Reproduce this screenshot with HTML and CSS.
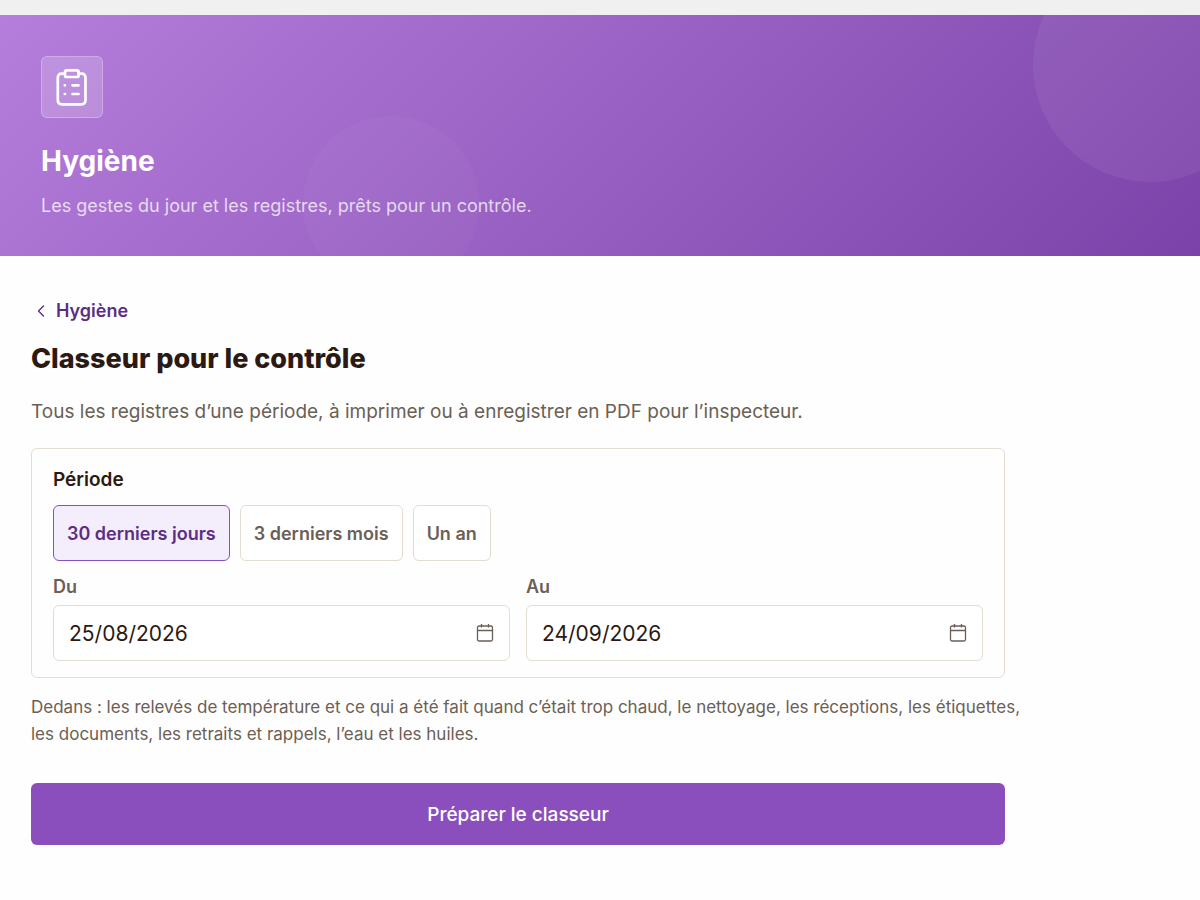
FILE: index.html
```
<!DOCTYPE html>
<html lang="fr">
<head>
    <meta charset="UTF-8">
    <meta name="viewport" content="width=device-width, initial-scale=1.0">
    <title>Classeur pour le contrôle</title>
    <link rel="stylesheet" href="styles.css">
</head>
<body>
    <header class="hero">
        <div class="hero-icon">
            <svg width="42" height="42" viewBox="0 0 42 42" fill="none" stroke="#fff" stroke-width="2.700" stroke-linecap="round" stroke-linejoin="round" aria-hidden="true">
                <path d="M14 7.700h-3.500a3.700 3.700 0 0 0-3.700 3.700v23.200a3.700 3.700 0 0 0 3.700 3.700h20.300a3.700 3.700 0 0 0 3.700-3.700v-23.200a3.700 3.700 0 0 0-3.700-3.700h-3.200"/>
                <rect x="14" y="4.300" width="13.600" height="6.700" rx="1.600"/>
                <path d="M13.800 19.300h.1M21.500 19.300h6M13.800 28h.1M21.500 28h6"/>
            </svg>
        </div>
        <h1>Hygiène</h1>
        <p class="hero-subtitle">Les gestes du jour et les registres, prêts pour un contrôle.</p>
    </header>

    <main class="content">
        <a class="back-link" href="#">
            <svg width="20" height="20" viewBox="0 0 20 20" fill="none" stroke="currentColor" stroke-width="1.400" stroke-linecap="round" stroke-linejoin="round" aria-hidden="true">
                <path d="M12.500 5 7.500 10l5 5"/>
            </svg>
            Hygiène
        </a>
        <h2>Classeur pour le contrôle</h2>
        <p class="intro">Tous les registres d’une période, à imprimer ou à enregistrer en PDF pour l’inspecteur.</p>

        <form id="binder-form">
            <section class="card">
                <h3>Période</h3>
                <div class="chips">
                    <button type="button" class="chip active" aria-pressed="true">30 derniers jours</button>
                    <button type="button" class="chip" aria-pressed="false">3 derniers mois</button>
                    <button type="button" class="chip" aria-pressed="false">Un an</button>
                </div>
                <div class="dates">
                    <div class="field">
                        <label for="date-from">Du</label>
                        <div class="date-box">
                            <input type="text" id="date-from" inputmode="numeric" value="25/08/2026">
                            <svg width="18" height="20" viewBox="0 0 18 20" fill="none" stroke="#6b5f58" stroke-width="1.300" aria-hidden="true">
                                <rect x="1.500" y="3" width="15" height="15" rx="1.500"/>
                                <path d="M1.500 7.500h15M5.500 1v3.500M12.500 1v3.500"/>
                            </svg>
                        </div>
                    </div>
                    <div class="field">
                        <label for="date-to">Au</label>
                        <div class="date-box">
                            <input type="text" id="date-to" inputmode="numeric" value="24/09/2026">
                            <svg width="18" height="20" viewBox="0 0 18 20" fill="none" stroke="#6b5f58" stroke-width="1.300" aria-hidden="true">
                                <rect x="1.500" y="3" width="15" height="15" rx="1.500"/>
                                <path d="M1.500 7.500h15M5.500 1v3.500M12.500 1v3.500"/>
                            </svg>
                        </div>
                    </div>
                </div>
            </section>
            <p class="note">Dedans : les relevés de température et ce qui a été fait quand c’était trop chaud, le nettoyage, les réceptions, les étiquettes, les documents, les retraits et rappels, l’eau et les huiles.</p>
            <button type="submit" class="submit-btn">Préparer le classeur</button>
        </form>
    </main>
</body>
</html>
```
FILE: styles.css
```
:root {
    --primary: #8a4fbd;
    --primary-dark: #5b2d85;
    --primary-soft: #f4edfb;
    --dark: #2c1a12;
    --muted: #6b6055;
    --border: #e3ddd2;
    --border-radius: 6px;
}

* {
    box-sizing: border-box;
    margin: 0;
    padding: 0;
}

body {
    font-family: 'Inter', sans-serif;
    background: #fefefe;
    color: var(--dark);
    line-height: 24px;
    border-top: 15px solid #f0f0f0;
}

/* Hero banner */
.hero {
    position: relative;
    overflow: hidden;
    padding: 41px 41px 37px;
    color: white;
    background: linear-gradient(135deg, #b57edc 0%, #7b43a9 100%);
}

.hero::before,
.hero::after {
    content: "";
    position: absolute;
    border-radius: 50%;
}

.hero::before {
    top: -67px;
    right: -67px;
    width: 234px;
    height: 234px;
    background: rgba(255, 255, 255, 0.06);
}

.hero::after {
    bottom: -36px;
    left: 303px;
    width: 176px;
    height: 176px;
    background: rgba(255, 255, 255, 0.03);
}

.hero-icon {
    display: flex;
    align-items: center;
    justify-content: center;
    width: 62px;
    height: 62px;
    margin-bottom: 25px;
    border: 1px solid rgba(255, 255, 255, 0.25);
    border-radius: var(--border-radius);
    background: rgba(255, 255, 255, 0.18);
}

h1 {
    margin-bottom: 14px;
    font-size: 28px;
    line-height: 36px;
    font-weight: 700;
}

.hero-subtitle {
    font-size: 18px;
    line-height: 26px;
    color: rgba(255, 255, 255, 0.75);
}

/* Page content */
.content {
    max-width: 1036px;
    padding: 41px 31px;
}

.back-link {
    display: inline-flex;
    align-items: center;
    gap: 5px;
    font-size: 18px;
    line-height: 28px;
    font-weight: 600;
    color: var(--primary-dark);
    text-decoration: none;
}

h2 {
    margin: 14px 0 20px;
    font-size: 27px;
    line-height: 36px;
    font-weight: 800;
}

.intro {
    margin-bottom: 21px;
    font-size: 19px;
    line-height: 30px;
    color: var(--muted);
}

.card {
    padding: 16px 21px;
    border: 1px solid var(--border);
    border-radius: var(--border-radius);
}

h3 {
    margin-bottom: 10px;
    font-size: 19px;
    line-height: 30px;
    font-weight: 600;
}

.chips {
    display: flex;
    flex-wrap: wrap;
    gap: 10px;
    margin-bottom: 12px;
}

.chip {
    height: 56px;
    padding: 0 13px;
    border: 1px solid var(--border);
    border-radius: var(--border-radius);
    background: white;
    font-family: inherit;
    font-size: 18px;
    font-weight: 600;
    color: var(--muted);
    cursor: pointer;
}

.chip.active {
    border-color: var(--primary);
    background: var(--primary-soft);
    color: var(--primary-dark);
}

.dates {
    display: grid;
    grid-template-columns: 1fr 1fr;
    gap: 16px;
}

label {
    display: block;
    margin-bottom: 4px;
    font-size: 18px;
    line-height: 28px;
    font-weight: 600;
    color: var(--muted);
}

.date-box {
    display: flex;
    align-items: center;
    height: 56px;
    padding: 0 15px;
    border: 1px solid var(--border);
    border-radius: var(--border-radius);
    background: white;
}

.date-box:focus-within {
    border-color: var(--primary);
}

.date-box input {
    flex: 1;
    min-width: 0;
    border: none;
    outline: none;
    background: none;
    font-family: inherit;
    font-size: 21px;
    color: var(--dark);
}

.note {
    margin: 16px -16px 35px 0;
    font-size: 17px;
    line-height: 27px;
    color: var(--muted);
}

.submit-btn {
    width: 100%;
    height: 62px;
    border: none;
    border-radius: var(--border-radius);
    background: var(--primary);
    color: white;
    font-family: inherit;
    font-size: 19px;
    font-weight: 500;
    cursor: pointer;
}

.submit-btn:hover {
    background: var(--primary-dark);
}

@media (max-width: 600px) {
    .dates {
        grid-template-columns: 1fr;
    }
}
```
